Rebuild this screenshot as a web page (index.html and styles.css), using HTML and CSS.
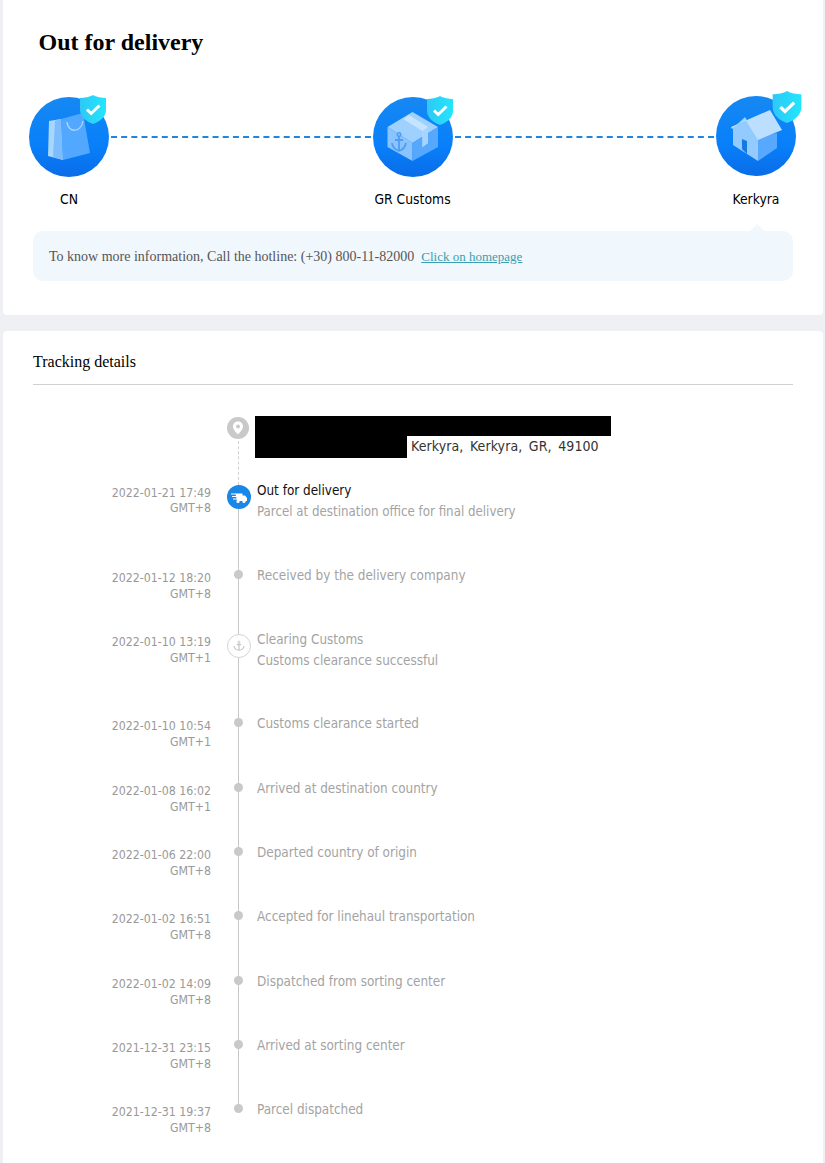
FILE: index.html
```html
<!DOCTYPE html>
<html lang="en">
<head>
<meta charset="utf-8">
<title>Out for delivery</title>
<link rel="stylesheet" href="styles.css">
</head>
<body>
<svg class="defs" width="0" height="0" aria-hidden="true">
  <defs>
    <linearGradient id="disc" x1="0" y1="0" x2="0" y2="1">
      <stop offset="0" stop-color="#1688f2"/>
      <stop offset="0.6" stop-color="#0880fa"/>
      <stop offset="1" stop-color="#0a6ce8"/>
    </linearGradient>
    <linearGradient id="shield" x1="0" y1="0" x2="1" y2="0">
      <stop offset="0" stop-color="#2ec8f6"/>
      <stop offset="1" stop-color="#22e6fc"/>
    </linearGradient>
    <symbol id="badge" viewBox="0 0 26 29">
      <path d="M13 0 C16 2 22 3 26 3 V15 C26 22 19 27 13 29 C7 27 0 22 0 15 V3 C4 3 10 2 13 0 Z" fill="url(#shield)"/>
      <path d="M7 14.5 L11.2 18.5 L19.5 10.5" fill="none" stroke="#fff" stroke-width="3"/>
    </symbol>
  </defs>
</svg>

<section class="card card-top">
  <h1 class="title">Out for delivery</h1>
  <div class="steps">
    <div class="step">
      <div class="disc">
        <svg class="disc-svg" viewBox="0 0 80 80">
          <circle cx="40" cy="40" r="40" fill="url(#disc)"/>
          <path d="M20 24 L32 22 L34 63 L19 59 Z" fill="#a9d6ff"/>
          <path d="M26 24 L32 22 L34 63 L24 60 Z" fill="#7dbdff"/>
          <path d="M32 22 L54 16 L61 56 L34 63 Z" fill="#52a8ff"/>
          <path d="M38 25 C39 36 52 36 54 24" fill="none" stroke="#a9d4ff" stroke-width="1.5"/>
        </svg>
        <svg class="badge badge-first"><use href="#badge"/></svg>
      </div>
      <span class="step-name">CN</span>
    </div>
    <div class="link"></div>
    <div class="step">
      <div class="disc">
        <svg class="disc-svg" viewBox="0 0 80 80">
          <circle cx="40" cy="40" r="40" fill="url(#disc)"/>
          <path d="M14.5 30 L39.5 15 L65 30 L39.5 46 Z" fill="#9fd1ff"/>
          <path d="M14.5 30 L39.5 46 V64 L14.5 50 Z" fill="#8ac4ff"/>
          <path d="M39.5 46 L65 30 V50 L39.5 64 Z" fill="#56a8ff"/>
          <path d="M30 22 L36 18 L55 30 V46 L49.5 50 V34 Z" fill="#c6e4ff"/>
          <path d="M49.5 34 L55 30 V46 L49.5 50 Z" fill="#a5d4ff"/>
          <path d="M26 39 V53 M22 43 H30 M19 46 C19.5 51 23 53 26 54 C29 53 32 51 33 46" fill="none" stroke="#4e9df0" stroke-width="1.8"/>
          <circle cx="26" cy="37.5" r="1.8" fill="none" stroke="#4e9df0" stroke-width="1.4"/>
        </svg>
        <svg class="badge badge-mid"><use href="#badge"/></svg>
      </div>
      <span class="step-name">GR Customs</span>
    </div>
    <div class="link"></div>
    <div class="step step-last">
      <div class="disc">
        <svg class="disc-svg" viewBox="0 0 80 80">
          <circle cx="40" cy="40" r="40" fill="url(#disc)"/>
          <path d="M17 32 L29 21 L42 42 V65 L17 49 Z" fill="#94cbff"/>
          <path d="M42 42 L61 37 V52 L42 65 Z" fill="#56a9ff"/>
          <path d="M15 31 L54 14 L66 34 L42 44 L29 23 L16 33 Z" fill="#bcdfff"/>
          <path d="M26 43 L31 45 V58 L26 53 Z" fill="#1478e6"/>
        </svg>
        <svg class="badge badge-last"><use href="#badge"/></svg>
      </div>
      <span class="step-name">Kerkyra</span>
    </div>
  </div>
  <div class="notice">
    <span>To know more information, Call the hotline: (+30) 800-11-82000</span>
    <a class="notice-link" href="#">Click on homepage</a>
  </div>
</section>

<section class="card card-details">
  <h2 class="details-title">Tracking details</h2>
  <div class="address">
    <span class="pin">
      <svg viewBox="0 0 22 22" width="22" height="22">
        <circle cx="11" cy="11" r="11" fill="#c9c9c9"/>
        <path d="M11 4.5 C7.8 4.5 6 6.8 6 9.3 C6 12.5 9.5 15.8 11 17.5 C12.5 15.8 16 12.5 16 9.3 C16 6.8 14.2 4.5 11 4.5 Z" fill="#fff"/>
        <circle cx="11" cy="9.5" r="2" fill="#c9c9c9"/>
      </svg>
    </span>
    <div class="address-body">
      <div class="redact-full"></div>
      <div class="address-line">
        <div class="redact-part"></div>
        <span class="address-text">Kerkyra, Kerkyra, GR, 49100</span>
      </div>
    </div>
  </div>
  <ol class="timeline">
    <li class="row row-tall row-start">
      <div class="time">2022-01-21 17:49<br>GMT+8</div>
      <div class="node"><span class="node-icon node-truck">
        <svg viewBox="0 0 24 24" width="24" height="24">
          <path d="M8.5 8.5 H15.5 V16 H10 M15.5 10.5 H18 L20 13 V16 H15.5 Z" fill="#fff"/>
          <circle cx="11" cy="16.5" r="1.6" fill="#fff"/>
          <circle cx="17" cy="16.5" r="1.6" fill="#fff"/>
          <path d="M4 9 H9 M5 11.5 H10 M6 14 H10" stroke="#fff" stroke-width="1.2"/>
        </svg>
      </span></div>
      <div class="event"><div class="event-main">Out for delivery</div><div class="event-long">Parcel at destination office for final delivery</div></div>
    </li>
    <li class="row">
      <div class="time">2022-01-12 18:20<br>GMT+8</div>
      <div class="node"><span class="dot"></span></div>
      <div class="event">Received by the delivery company</div>
    </li>
    <li class="row row-tall">
      <div class="time">2022-01-10 13:19<br>GMT+1</div>
      <div class="node"><span class="node-icon node-anchor">
        <svg viewBox="0 0 24 24" width="22" height="22">
          <circle cx="12" cy="7.8" r="1.1" fill="none" stroke="#c6c6c6"/>
          <path d="M12 9 V16.5 M9.5 10.5 H14.5 M6.5 12 C7 15 9.5 16.5 12 16.5 C14.5 16.5 17 15 17.5 12" fill="none" stroke="#c6c6c6" stroke-width="1.3"/>
        </svg>
      </span></div>
      <div class="event"><div>Clearing Customs</div><div>Customs clearance successful</div></div>
    </li>
    <li class="row">
      <div class="time">2022-01-10 10:54<br>GMT+1</div>
      <div class="node"><span class="dot"></span></div>
      <div class="event">Customs clearance started</div>
    </li>
    <li class="row">
      <div class="time">2022-01-08 16:02<br>GMT+1</div>
      <div class="node"><span class="dot"></span></div>
      <div class="event">Arrived at destination country</div>
    </li>
    <li class="row">
      <div class="time">2022-01-06 22:00<br>GMT+8</div>
      <div class="node"><span class="dot"></span></div>
      <div class="event">Departed country of origin</div>
    </li>
    <li class="row">
      <div class="time">2022-01-02 16:51<br>GMT+8</div>
      <div class="node"><span class="dot"></span></div>
      <div class="event">Accepted for linehaul transportation</div>
    </li>
    <li class="row">
      <div class="time">2022-01-02 14:09<br>GMT+8</div>
      <div class="node"><span class="dot"></span></div>
      <div class="event">Dispatched from sorting center</div>
    </li>
    <li class="row">
      <div class="time">2021-12-31 23:15<br>GMT+8</div>
      <div class="node"><span class="dot"></span></div>
      <div class="event">Arrived at sorting center</div>
    </li>
    <li class="row row-end">
      <div class="time">2021-12-31 19:37<br>GMT+8</div>
      <div class="node"><span class="dot"></span></div>
      <div class="event">Parcel dispatched</div>
    </li>
  </ol>
</section>
</body>
</html>
```

FILE: styles.css
```css
* { box-sizing: border-box; }
html, body { margin: 0; padding: 0; }
body {
  width: 825px;
  height: 1163px;
  overflow: hidden;
  padding: 0 2px 0 3px;
  background: #eff0f3;
  font-family: "DejaVu Sans", "Noto Sans", sans-serif;
  font-stretch: condensed;
  font-size: 13.4px;
  color: #000;
}
.defs { position: absolute; }
.card { background: #fff; border-radius: 4px; }
.card-top { height: 315px; padding: 28px 30px 0; border-radius: 0 0 4px 4px; }
.card-details { height: 832px; margin-top: 16px; padding: 21px 30px 0; border-radius: 4px 4px 0 0; }

.title {
  margin: 0 0 0 5.5px;
  font: bold 24px/29px "Liberation Serif", serif;
}
.steps {
  display: flex;
  align-items: flex-start;
  margin: 40px -3px 0 -4px;
}
.step {
  width: 80px;
  flex: none;
  display: flex;
  flex-direction: column;
  align-items: center;
}
.disc { position: relative; width: 80px; height: 80px; }
.disc-svg { display: block; width: 80px; height: 80px; }
.badge { position: absolute; width: 26px; height: 29px; }
.badge-first { right: 3px; top: -2px; }
.badge-mid { right: 0; top: -1px; }
.badge-last { right: -6px; top: -5px; width: 30px; height: 32px; }
.step-name { margin-top: 12px; font-size: 13.8px; line-height: 20px; white-space: nowrap; }
.step-last { margin-top: -1px; }
.step-last .step-name { margin-top: 13px; }
.link {
  flex: 1;
  margin: 39px 2px 0;
  border-top: 2px dashed #1f86df;
}

.notice {
  position: relative;
  display: flex;
  align-items: center;
  gap: 7px;
  height: 50px;
  margin-top: 22px;
  padding: 1px 16px 0;
  border-radius: 10px;
  background: #f0f7fd;
  font: 14px "Liberation Serif", serif;
  color: #555;
}
.notice::before {
  content: "";
  position: absolute;
  right: 29px;
  top: -7px;
  border: 7px solid transparent;
  border-top: 0;
  border-bottom-color: #f0f7fd;
}
.notice-link { color: #3a9fb0; font-size: 13px; }

.details-title {
  margin: 0;
  padding-bottom: 12px;
  border-bottom: 1px solid #d0d0d0;
  font: normal 16px/20px "Liberation Serif", serif;
}
.address { display: flex; margin-top: 31px; }
.pin { width: 22px; height: 22px; margin-left: 194px; margin-top: 1px; position: relative; }
.pin svg { display: block; }
.pin::after {
  content: "";
  position: absolute;
  left: 10.5px;
  top: 24px;
  height: 44px;
  border-left: 1px dashed #d0d0d0;
}
.address-body { margin-left: 6px; width: 356px; height: 42px; }
.redact-full { height: 20px; background: #000; }
.address-line { display: flex; align-items: flex-start; height: 22px; }
.redact-part { width: 152px; height: 22px; background: #000; }
.address-text { margin-left: 4px; color: #333; font-size: 14px; line-height: 21px; word-spacing: 2.4px; letter-spacing: .1px; }

.timeline { list-style: none; margin: 22px 0 0; padding: 0; }
.row { display: flex; height: 64.3px; }
.row-tall { height: 84.6px; }
.time {
  width: 178px;
  flex: none;
  padding-top: 5px;
  text-align: right;
  font-size: 12.25px;
  line-height: 16px;
  color: #999;
}
.row-start .time { padding-top: 6px; line-height: 15px; }
.node {
  position: relative;
  flex: none;
  width: 24px;
  margin: 0 6px 0 16px;
  display: flex;
  justify-content: center;
  align-items: flex-start;
  padding-top: 5px;
}
.node::before {
  content: "";
  position: absolute;
  left: 11px;
  top: 0;
  bottom: 0;
  width: 1px;
  background: #c8c8c8;
}
.row-start .node::before { top: 5px; }
.row-end .node::before { bottom: auto; height: 8px; }
.dot {
  position: relative;
  width: 9px;
  height: 9px;
  border-radius: 50%;
  background: #c9c9c9;
  margin-left: -1px;
}
.node-icon {
  position: relative;
  display: flex;
  align-items: center;
  justify-content: center;
  width: 24px;
  height: 24px;
  border-radius: 50%;
}
.node-truck { background: #1a86e8; }
.node-anchor { background: #fff; border: 1px solid #d4d4d4; }
.event { line-height: 21px; color: #a3a3a3; }
.event-main { color: #111; }
.event-long { font-size: 13.2px; }
```
